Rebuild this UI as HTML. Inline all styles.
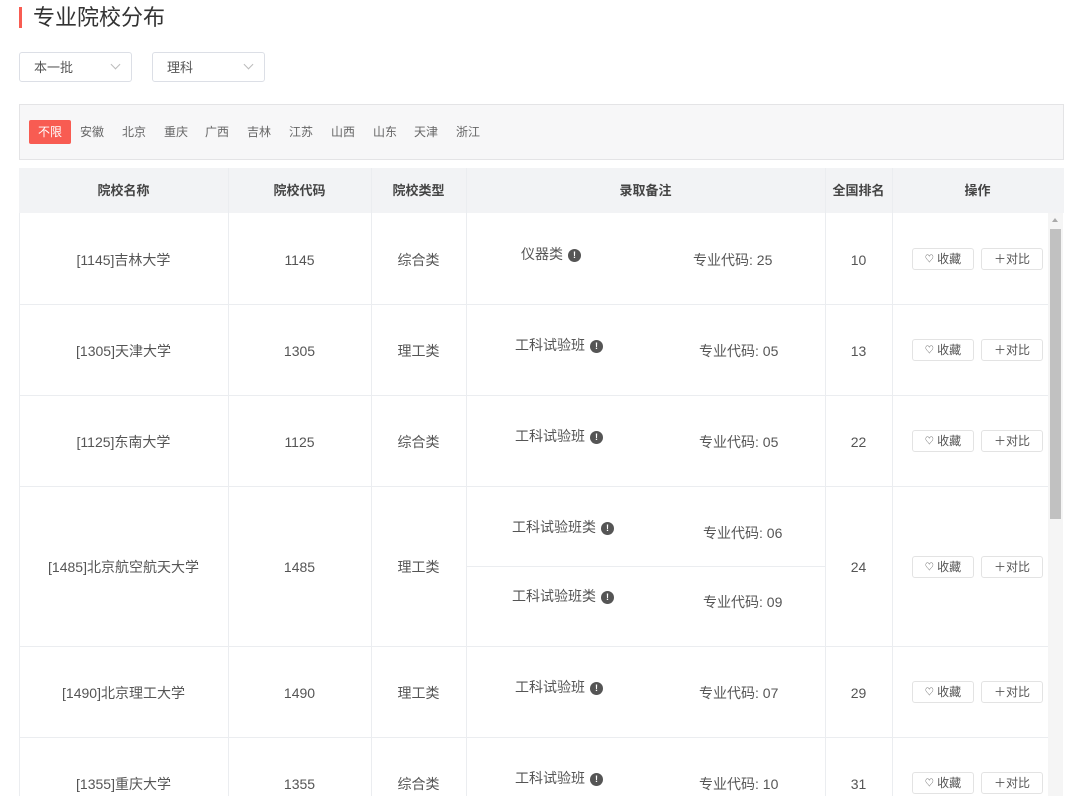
<!DOCTYPE html>
<html><head><meta charset="utf-8"><style>
*{margin:0;padding:0;box-sizing:border-box}
body{width:1080px;height:796px;overflow:hidden;background:#fff;font-family:"Liberation Sans","Noto Sans CJK SC",sans-serif;color:#555;position:relative}
.a{position:absolute}
.bar{left:19px;top:7px;width:3px;height:21px;background:#f85c52}
.title{left:33px;top:3px;font-size:22px;color:#333;line-height:30px}
.dd{top:52px;width:113px;height:30px;border:1px solid #dcdfe6;border-radius:3px;font-size:13px;color:#555;line-height:30px;padding-left:14px}
.dd i{position:absolute;right:12px;top:8px;width:7px;height:7px;border-right:1px solid #bbb;border-bottom:1px solid #bbb;transform:rotate(45deg)}
.fb{left:19px;top:104px;width:1045px;height:56px;background:#f7f7f8;border:1px solid #e4e4e6}
.tag{top:120px;height:24px;line-height:24px;font-size:12px;color:#666}
.on{left:29px;width:42px;background:#f85c52;color:#fff;border-radius:2px;text-align:center}
.hd{left:19px;top:168px;width:1045px;height:45px;background:#f2f3f5}
.th{top:168px;height:45px;line-height:45px;font-size:13px;font-weight:bold;color:#444;text-align:center}
.vl{width:1px;background:#ebedf0}
.hl{height:1px;background:#ebedf0}
.c{font-size:14px;color:#555;text-align:center;line-height:20px}
.btn{width:62px;height:22px;border:1px solid #e3e3e3;border-radius:3px;font-size:12px;color:#555;line-height:21px;text-align:center}
.btn small{font-size:9px;vertical-align:1px}
.ic{display:inline-block;width:13px;height:13px;border-radius:50%;background:#555;color:#fff;font-size:9px;line-height:13px;text-align:center;font-weight:bold;vertical-align:1px;margin-left:5px}
</style></head><body>
<div class="a bar"></div><div class="a title">专业院校分布</div>
<div class="a dd" style="left:19px">本一批<i></i></div>
<div class="a dd" style="left:152px">理科<i></i></div>
<div class="a fb"></div>
<div class="a tag on">不限</div>
<div class="a tag" style="left:80px">安徽</div><div class="a tag" style="left:122px">北京</div><div class="a tag" style="left:164px">重庆</div><div class="a tag" style="left:205px">广西</div><div class="a tag" style="left:247px">吉林</div><div class="a tag" style="left:289px">江苏</div><div class="a tag" style="left:331px">山西</div><div class="a tag" style="left:373px">山东</div><div class="a tag" style="left:414px">天津</div><div class="a tag" style="left:456px">浙江</div>
<div class="a hd"></div>
<div class="a th" style="left:19px;width:209px">院校名称</div>
<div class="a th" style="left:228px;width:143px">院校代码</div>
<div class="a th" style="left:371px;width:95px">院校类型</div>
<div class="a th" style="left:466px;width:359px">录取备注</div>
<div class="a th" style="left:825px;width:67px">全国排名</div>
<div class="a th" style="left:892px;width:171px">操作</div>
<div class="a vl" style="left:19px;top:213px;height:583px"></div>
<div class="a vl" style="left:228px;top:168px;height:628px"></div>
<div class="a vl" style="left:371px;top:168px;height:628px"></div>
<div class="a vl" style="left:466px;top:168px;height:628px"></div>
<div class="a vl" style="left:825px;top:168px;height:628px"></div>
<div class="a vl" style="left:892px;top:168px;height:628px"></div>
<div class="a hl" style="left:19px;top:304px;width:1030px"></div>
<div class="a hl" style="left:19px;top:395px;width:1030px"></div>
<div class="a hl" style="left:19px;top:486px;width:1030px"></div>
<div class="a hl" style="left:466px;top:566px;width:359px"></div>
<div class="a hl" style="left:19px;top:646px;width:1030px"></div>
<div class="a hl" style="left:19px;top:737px;width:1030px"></div>
<div class="a" style="left:1048px;top:213px;width:15px;height:583px;background:#f5f5f5"></div>
<div class="a" style="left:1050px;top:229px;width:11px;height:290px;background:#c1c1c1"></div>
<div class="a" style="left:1052px;top:218px;width:0;height:0;border-left:3px solid transparent;border-right:3px solid transparent;border-bottom:4px solid #aaa"></div>

<div class="a c" style="left:19px;top:250px;width:209px">[1145]吉林大学</div>
<div class="a c" style="left:228px;top:250px;width:143px">1145</div>
<div class="a c" style="left:371px;top:250px;width:95px">综合类</div>
<div class="a c" style="left:521px;top:244px">仪器类<span class="ic">!</span></div>
<div class="a c" style="left:693px;top:250px">专业代码: 25</div>
<div class="a c" style="left:825px;top:250px;width:67px">10</div>
<div class="a btn" style="left:912px;top:248px"><small>♡</small> 收藏</div><div class="a btn" style="left:981px;top:248px">＋对比</div>

<div class="a c" style="left:19px;top:341px;width:209px">[1305]天津大学</div>
<div class="a c" style="left:228px;top:341px;width:143px">1305</div>
<div class="a c" style="left:371px;top:341px;width:95px">理工类</div>
<div class="a c" style="left:515px;top:335px">工科试验班<span class="ic">!</span></div>
<div class="a c" style="left:699px;top:341px">专业代码: 05</div>
<div class="a c" style="left:825px;top:341px;width:67px">13</div>
<div class="a btn" style="left:912px;top:339px"><small>♡</small> 收藏</div><div class="a btn" style="left:981px;top:339px">＋对比</div>

<div class="a c" style="left:19px;top:432px;width:209px">[1125]东南大学</div>
<div class="a c" style="left:228px;top:432px;width:143px">1125</div>
<div class="a c" style="left:371px;top:432px;width:95px">综合类</div>
<div class="a c" style="left:515px;top:426px">工科试验班<span class="ic">!</span></div>
<div class="a c" style="left:699px;top:432px">专业代码: 05</div>
<div class="a c" style="left:825px;top:432px;width:67px">22</div>
<div class="a btn" style="left:912px;top:430px"><small>♡</small> 收藏</div><div class="a btn" style="left:981px;top:430px">＋对比</div>

<div class="a c" style="left:19px;top:557px;width:209px">[1485]北京航空航天大学</div>
<div class="a c" style="left:228px;top:557px;width:143px">1485</div>
<div class="a c" style="left:371px;top:557px;width:95px">理工类</div>
<div class="a c" style="left:512px;top:517px">工科试验班类<span class="ic">!</span></div>
<div class="a c" style="left:703px;top:523px">专业代码: 06</div>
<div class="a c" style="left:512px;top:586px">工科试验班类<span class="ic">!</span></div>
<div class="a c" style="left:703px;top:592px">专业代码: 09</div>
<div class="a c" style="left:825px;top:557px;width:67px">24</div>
<div class="a btn" style="left:912px;top:556px"><small>♡</small> 收藏</div><div class="a btn" style="left:981px;top:556px">＋对比</div>

<div class="a c" style="left:19px;top:683px;width:209px">[1490]北京理工大学</div>
<div class="a c" style="left:228px;top:683px;width:143px">1490</div>
<div class="a c" style="left:371px;top:683px;width:95px">理工类</div>
<div class="a c" style="left:515px;top:677px">工科试验班<span class="ic">!</span></div>
<div class="a c" style="left:699px;top:683px">专业代码: 07</div>
<div class="a c" style="left:825px;top:683px;width:67px">29</div>
<div class="a btn" style="left:912px;top:681px"><small>♡</small> 收藏</div><div class="a btn" style="left:981px;top:681px">＋对比</div>

<div class="a c" style="left:19px;top:774px;width:209px">[1355]重庆大学</div>
<div class="a c" style="left:228px;top:774px;width:143px">1355</div>
<div class="a c" style="left:371px;top:774px;width:95px">综合类</div>
<div class="a c" style="left:515px;top:768px">工科试验班<span class="ic">!</span></div>
<div class="a c" style="left:699px;top:774px">专业代码: 10</div>
<div class="a c" style="left:825px;top:774px;width:67px">31</div>
<div class="a btn" style="left:912px;top:772px"><small>♡</small> 收藏</div><div class="a btn" style="left:981px;top:772px">＋对比</div>
</body></html>
